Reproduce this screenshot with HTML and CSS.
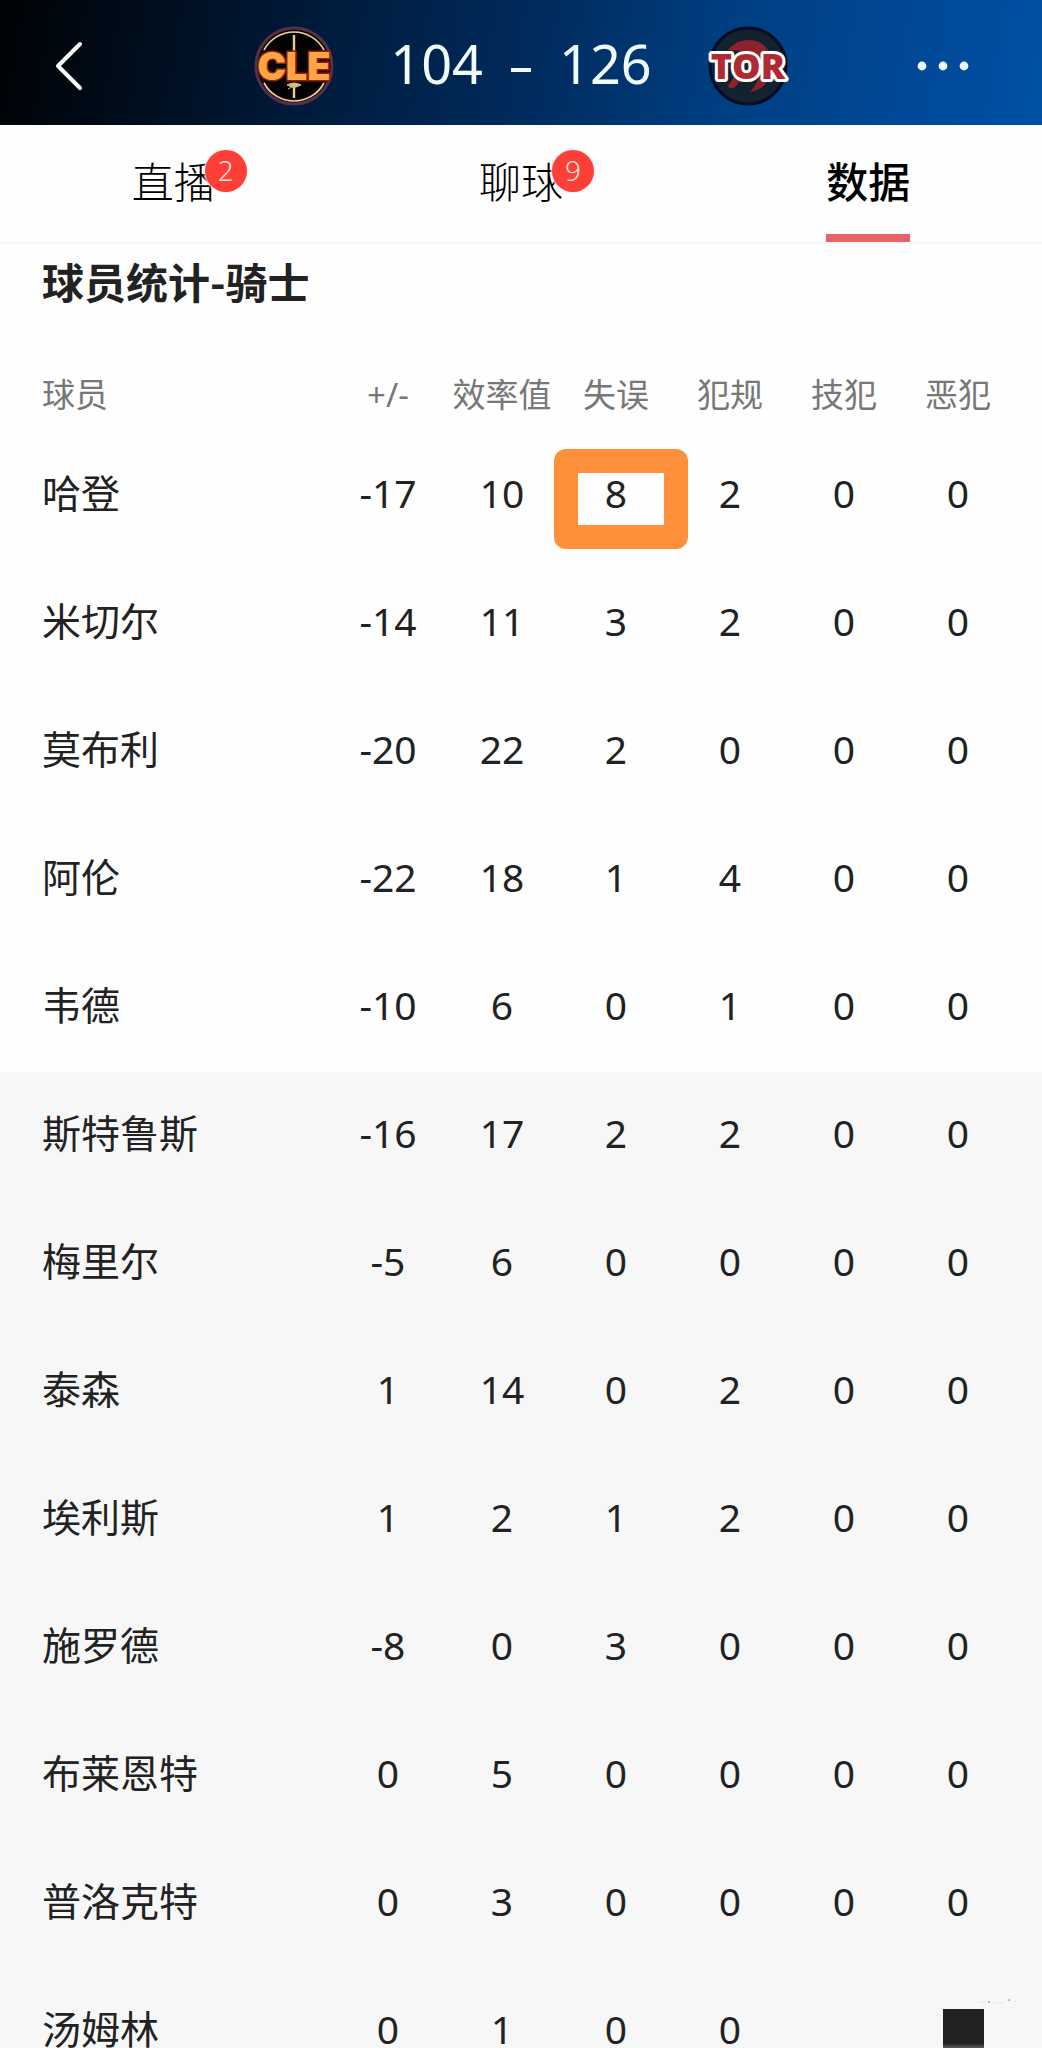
FILE: index.html
```html
<!DOCTYPE html>
<html lang="zh-CN">
<head>
<meta charset="utf-8">
<meta name="viewport" content="width=device-width, initial-scale=1">
<title>球员统计-骑士</title>
<link rel="stylesheet" href="styles.css">
</head>
<body>
<div class="app">
  <header class="topbar">
    <button class="icon-button back" type="button" aria-label="返回">
      <svg width="30" height="52" viewBox="0 0 30 52" fill="none" stroke="#fff" stroke-width="4" stroke-linecap="round" stroke-linejoin="round"><path d="M26 4 4 26l22 22"/></svg>
    </button>
    <div class="match">
      <svg class="logo" viewBox="0 0 80 80" role="img" aria-label="CLE">
        <circle cx="40" cy="40" r="38" fill="#160608" stroke="#54304a" stroke-width="3"/>
        <circle cx="40" cy="40" r="34" fill="#050203" stroke="#5a1410" stroke-width="1"/>
        <path d="M10 24a34 34 0 0 1 60 0M10 57a34 34 0 0 0 60 0" fill="none" stroke="#e8d59a" stroke-width="1.6"/>
        <path d="M40 9v18M40 57v15" stroke="#e3cd8e" stroke-width="2.4"/>
        <path d="M33 59q7-4 14 0l-5 2h-4zM34 63l4-2" fill="#d9bc7c" stroke="#d9bc7c"/>
        <text class="logo-text logo-text-cle" x="40" y="54" text-anchor="middle">CLE</text>
      </svg>
      <span class="score">104</span>
      <span class="score-dash"></span>
      <span class="score">126</span>
      <svg class="logo" viewBox="0 0 80 80" role="img" aria-label="TOR">
        <circle cx="40" cy="40" r="38" fill="#12232f" stroke="#030b25" stroke-width="3"/>
        <path d="M20 24C32 8 60 11 64 34c2 18-8 30-22 32 6-6 12-16 8-28-5-11-17-14-30-14z" fill="#8b222c"/>
        <path d="M20 60l10-15 8 3-11 13q-5 3-7-1z" fill="#8b222c"/>
        <text class="logo-text logo-text-tor" x="40" y="53" text-anchor="middle">TOR</text>
      </svg>
    </div>
    <button class="icon-button more" type="button" aria-label="更多">
      <svg width="54" height="12" viewBox="0 0 54 12" fill="#eefaff"><circle cx="6" cy="6" r="4.4"/><circle cx="27" cy="6" r="4.4"/><circle cx="48" cy="6" r="4.4"/></svg>
    </button>
  </header>

  <nav class="tabs">
    <a class="tab" href="#live"><span class="tab-label">直播<span class="badge">2</span></span></a>
    <a class="tab" href="#chat"><span class="tab-label">聊球<span class="badge">9</span></span></a>
    <a class="tab tab-active" href="#stats" aria-current="page"><span class="tab-label">数据</span></a>
  </nav>

  <main class="content" id="stats">
    <h1 class="title">球员统计-骑士</h1>
    <table class="stats">
      <thead>
        <tr><th class="name" scope="col">球员</th><th scope="col">+/-</th><th scope="col">效率值</th><th scope="col">失误</th><th scope="col">犯规</th><th scope="col">技犯</th><th scope="col">恶犯</th><th class="edge"></th></tr>
      </thead>
      <tbody class="starters">
        <tr><th class="name" scope="row">哈登</th><td>-17</td><td>10</td><td class="marked">8</td><td>2</td><td>0</td><td>0</td><td></td></tr>
        <tr><th class="name" scope="row">米切尔</th><td>-14</td><td>11</td><td>3</td><td>2</td><td>0</td><td>0</td><td></td></tr>
        <tr><th class="name" scope="row">莫布利</th><td>-20</td><td>22</td><td>2</td><td>0</td><td>0</td><td>0</td><td></td></tr>
        <tr><th class="name" scope="row">阿伦</th><td>-22</td><td>18</td><td>1</td><td>4</td><td>0</td><td>0</td><td></td></tr>
        <tr><th class="name" scope="row">韦德</th><td>-10</td><td>6</td><td>0</td><td>1</td><td>0</td><td>0</td><td></td></tr>
      </tbody>
      <tbody class="bench">
        <tr><th class="name" scope="row">斯特鲁斯</th><td>-16</td><td>17</td><td>2</td><td>2</td><td>0</td><td>0</td><td></td></tr>
        <tr><th class="name" scope="row">梅里尔</th><td>-5</td><td>6</td><td>0</td><td>0</td><td>0</td><td>0</td><td></td></tr>
        <tr><th class="name" scope="row">泰森</th><td>1</td><td>14</td><td>0</td><td>2</td><td>0</td><td>0</td><td></td></tr>
        <tr><th class="name" scope="row">埃利斯</th><td>1</td><td>2</td><td>1</td><td>2</td><td>0</td><td>0</td><td></td></tr>
        <tr><th class="name" scope="row">施罗德</th><td>-8</td><td>0</td><td>3</td><td>0</td><td>0</td><td>0</td><td></td></tr>
        <tr><th class="name" scope="row">布莱恩特</th><td>0</td><td>5</td><td>0</td><td>0</td><td>0</td><td>0</td><td></td></tr>
        <tr><th class="name" scope="row">普洛克特</th><td>0</td><td>3</td><td>0</td><td>0</td><td>0</td><td>0</td><td></td></tr>
        <tr><th class="name" scope="row">汤姆林</th><td>0</td><td>1</td><td>0</td><td>0</td><td></td><td class="covered">
          <svg class="specks" width="40" height="6" viewBox="0 0 40 6" aria-hidden="true"><path d="M0 4h7M15 5h4M21 5h4M36 3h2" stroke="#e4e4e4"/><path d="M10 4h2M30 2h2" stroke="#bbb" stroke-width="2"/></svg>
        </td><td></td></tr>
      </tbody>
    </table>
  </main>
</div>
</body>
</html>
```
FILE: styles.css
```css
*,
*::before,
*::after {
  box-sizing: border-box;
}

body {
  margin: 0;
  background: #fefefe;
  color: #222;
  font-family: "Noto Sans", "Noto Sans CJK SC", sans-serif;
}

.app {
  display: flex;
  flex-direction: column;
  height: 100vh;
}

/* Score header */
.topbar {
  flex: none;
  display: grid;
  grid-template-columns: 1fr auto 1fr;
  align-items: center;
  height: 125px;
  padding: 6px 54px 0;
  background: linear-gradient(100deg, #000205 0%, #000d1c 14%, #001c3e 32%, #002c5f 52%, #003f83 70%, #0050a6 100%);
}

.icon-button {
  display: flex;
  padding: 0;
  border: 0;
  background: none;
  cursor: pointer;
}

.back {
  justify-self: start;
}

.more {
  justify-self: end;
  margin-right: 18px;
}

.match {
  display: flex;
  align-items: center;
}

.logo {
  width: 80px;
  height: 80px;
  overflow: visible;
}

.logo-text {
  font-family: "Open Sans", sans-serif;
  font-weight: 800;
}

.logo-text-cle {
  fill: #ffa544;
  stroke: #8f210c;
  stroke-width: 3px;
  paint-order: stroke;
  font-family: Inter, sans-serif;
  font-weight: 900;
  font-size: 38px;
}

.logo-text-tor {
  fill: #b02a33;
  stroke: #fff;
  stroke-width: 6px;
  stroke-linejoin: round;
  paint-order: stroke;
  font-size: 36px;
}

.score {
  margin: 0 56px;
  padding-bottom: 6px;
  color: #f2fcff;
  font-size: 54px;
  line-height: 74px;
}

.score-dash {
  width: 20px;
  height: 4px;
  margin: 8px -28px 0;
  background: #f2fcff;
}

/* Tabs */
.tabs {
  flex: none;
  display: grid;
  grid-template-columns: repeat(3, 1fr);
  height: 119px;
  border-bottom: 2px solid #f7f7f7;
}

.tab {
  display: flex;
  justify-content: center;
  color: #000;
  font-size: 42px;
  font-family: "Noto Sans CJK SC", sans-serif;
  font-weight: 300;
  text-decoration: none;
}

.tab-label {
  position: relative;
  line-height: 109px;
}

.tab-active {
  font-weight: 500;
}

.tab-active .tab-label {
  border-bottom: 8px solid #e86165;
}

.badge {
  position: absolute;
  top: 25px;
  right: -31px;
  width: 42px;
  height: 42px;
  border-radius: 50%;
  background: #fd3f38;
  box-shadow: 0 0 2px 1px #ffe9e6;
  color: #ffe1dc;
  font-family: "Noto Sans", sans-serif;
  font-size: 28px;
  line-height: 40px;
  text-align: center;
}

/* Player statistics */
.content {
  flex: 1;
  min-height: 0;
  overflow-y: auto;
  scrollbar-width: none;
}

.title {
  margin: 0 0 40px;
  padding: 0 42px;
  font-family: "Noto Sans CJK SC", sans-serif;
  font-size: 42px;
  font-weight: 700;
  line-height: 74px;
}

.stats {
  width: 100%;
  border-collapse: collapse;
  table-layout: fixed;
}

.stats th,
.stats td {
  width: 114px;
  height: 128px;
  padding: 0 0 6px;
  font-size: 39px;
  font-weight: 400;
  line-height: 40px;
  text-align: center;
  white-space: nowrap;
}

.stats thead th {
  height: 74px;
  padding-bottom: 0;
  color: #777;
  font-size: 33px;
}

.stats .name {
  width: auto;
  padding-left: 42px;
  text-align: left;
}

.stats .edge {
  width: 27px;
}

.bench {
  background: #f7f7f7;
}

.marked,
.covered {
  position: relative;
}

.marked::after {
  content: "";
  position: absolute;
  top: 17px;
  left: -5px;
  width: 134px;
  height: 100px;
  border: 24px solid #ff8f3a;
  border-radius: 12px;
}

.covered::after {
  content: "";
  position: absolute;
  top: 41px;
  left: 42px;
  width: 41px;
  height: 41px;
  background: linear-gradient(#222 84%, #777);
}

.specks {
  position: absolute;
  top: 30px;
  left: 77px;
}
```
